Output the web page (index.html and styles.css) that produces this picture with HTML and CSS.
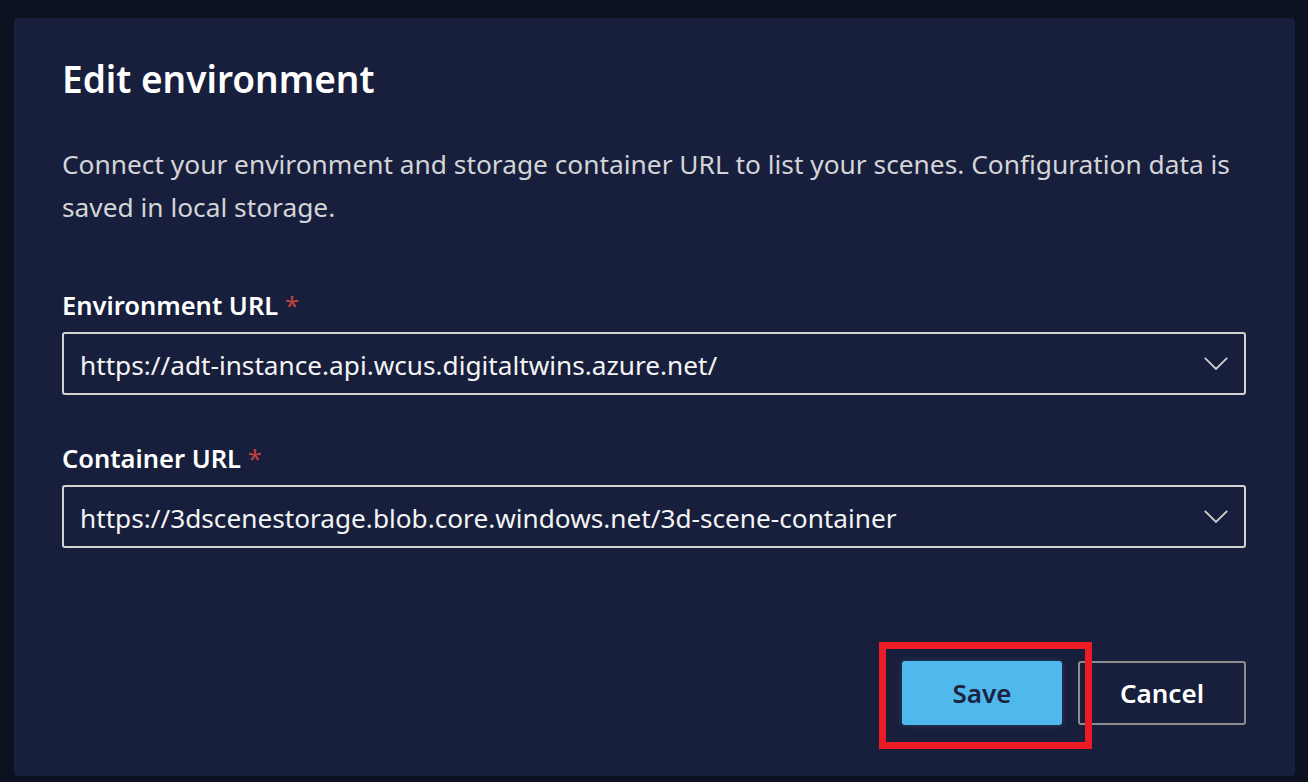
FILE: index.html
```html
<!DOCTYPE html>
<html lang="en">
<head>
<meta charset="utf-8">
<title>Edit environment</title>
<link rel="stylesheet" href="styles.css">
</head>
<body>
<div class="dialog">
  <h1 class="title">Edit environment</h1>
  <p class="desc">Connect your environment and storage container URL to list your scenes. Configuration data is saved in local storage.</p>
  <div class="field">
    <label class="label">Environment URL <span class="req">*</span></label>
    <div class="combo">
      <span class="value">https://adt-instance.api.wcus.digitaltwins.azure.net/</span>
      <svg class="chev" width="24" height="14" viewBox="0 0 24 14"><path d="M0.8 0.8 L12 12 L23.2 0.8" fill="none" stroke="#cfcfcf" stroke-width="1.8"/></svg>
    </div>
  </div>
  <div class="field field2">
    <label class="label">Container URL <span class="req">*</span></label>
    <div class="combo">
      <span class="value">https://3dscenestorage.blob.core.windows.net/3d-scene-container</span>
      <svg class="chev" width="24" height="14" viewBox="0 0 24 14"><path d="M0.8 0.8 L12 12 L23.2 0.8" fill="none" stroke="#cfcfcf" stroke-width="1.8"/></svg>
    </div>
  </div>
  <div class="actions">
    <div class="save-wrap">
      <button class="btn primary">Save</button>
      <div class="highlight"></div>
    </div>
    <button class="btn secondary">Cancel</button>
  </div>
</div>
</body>
</html>
```
FILE: styles.css
```css
html, body {
  margin: 0;
  padding: 0;
  background: #0c1120;
  width: 1308px;
  height: 782px;
  overflow: hidden;
}
body {
  padding: 18px 13px 6px 14px;
  box-sizing: border-box;
  font-family: "Noto Sans", "Open Sans", sans-serif;
}
.dialog {
  background: #171f3c;
  border-radius: 4px;
  height: 758px;
  box-sizing: border-box;
  padding: 39px 49px 51px 48px;
  display: flex;
  flex-direction: column;
}
.title {
  margin: 0;
  font-size: 37px;
  line-height: 44px;
  font-weight: 600;
  color: #ffffff;
}
.desc {
  margin: 42px 0 0 0;
  font-size: 26.3px;
  line-height: 43px;
  color: #d4d4d8;
}
.field {
  margin-top: 60px;
  display: flex;
  flex-direction: column;
}
.field2 {
  margin-top: 47px;
}
.label {
  font-size: 25.5px;
  line-height: 32px;
  font-weight: 600;
  color: #ffffff;
}
.req {
  color: #c4403f;
  font-weight: 400;
}
.combo {
  margin-top: 11px;
  height: 63px;
  box-sizing: border-box;
  border: 2px solid #d2d2d2;
  border-radius: 3px;
  display: flex;
  align-items: center;
  padding: 2px 16px 0 16px;
}
.value {
  flex: 1;
  font-size: 26.2px;
  color: #f4f4f4;
  white-space: nowrap;
}
.chev {
  display: block;
  margin-top: -2px;
}
.actions {
  margin-top: auto;
  display: flex;
  justify-content: flex-end;
  gap: 16px;
}
.save-wrap {
  position: relative;
}
.btn {
  font-family: inherit;
  font-size: 26px;
  font-weight: 600;
  height: 64px;
  border-radius: 3px;
  box-sizing: border-box;
  cursor: pointer;
}
.primary {
  width: 160px;
  background: #4fb9ec;
  color: #1a2342;
  border: none;
  box-shadow: 0 0 6px rgba(120, 150, 200, 0.25);
  display: block;
}
.secondary {
  width: 168px;
  background: transparent;
  color: #ffffff;
  border: 2px solid #8c8c8c;
}
.highlight {
  position: absolute;
  left: -23px;
  top: -19px;
  width: 213px;
  height: 107px;
  box-sizing: border-box;
  border: 7px solid #ed1c24;
  pointer-events: none;
}
```
